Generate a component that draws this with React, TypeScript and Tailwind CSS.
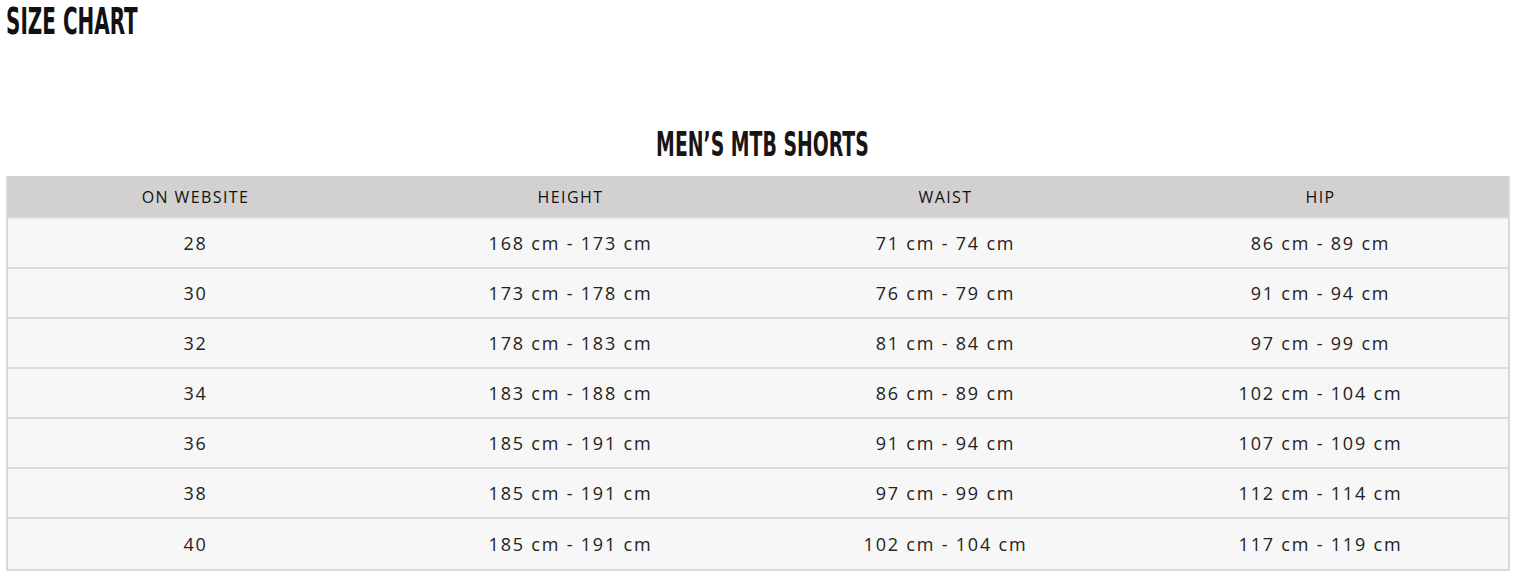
import React from 'react';

const rows = [
  ['28', '168 cm - 173 cm', '71 cm - 74 cm', '86 cm - 89 cm'],
  ['30', '173 cm - 178 cm', '76 cm - 79 cm', '91 cm - 94 cm'],
  ['32', '178 cm - 183 cm', '81 cm - 84 cm', '97 cm - 99 cm'],
  ['34', '183 cm - 188 cm', '86 cm - 89 cm', '102 cm - 104 cm'],
  ['36', '185 cm - 191 cm', '91 cm - 94 cm', '107 cm - 109 cm'],
  ['38', '185 cm - 191 cm', '97 cm - 99 cm', '112 cm - 114 cm'],
  ['40', '185 cm - 191 cm', '102 cm - 104 cm', '117 cm - 119 cm'],
];

const App: React.FC = () => {
  return (
    <div className="w-[1524px] h-[577px] bg-white px-[6px]">
      <h1 className="pt-[2px] text-[37px] leading-[40px] font-bold text-[#111] uppercase [font-family:'DejaVu_Sans_Condensed',sans-serif]">
        <span className="block w-max origin-left scale-x-[0.6]">Size Chart</span>
      </h1>

      <h2 className="mt-[84px] flex justify-center text-[33px] leading-[38px] font-bold text-[#1a1414] [font-family:'DejaVu_Sans_Condensed',sans-serif]">
        <span className="block w-max scale-x-[0.635]">MEN’S MTB SHORTS</span>
      </h2>

      <div className="mt-[12px] w-[1504px] border-x-2 border-b-2 border-[#d9d9d9] [font-family:'Open_Sans',sans-serif]">
        <div className="grid grid-cols-4 h-[43px] bg-[#d2d0d1] border-b-2 border-[#e2e2e2]">
          {['ON WEBSITE', 'HEIGHT', 'WAIST', 'HIP'].map((h) => (
            <div key={h} className="flex items-center justify-center text-[16px] tracking-[1.4px] text-[#111]">
              {h}
            </div>
          ))}
        </div>
        {rows.map((r, i) => (
          <div
            key={i}
            className={`grid grid-cols-4 h-[50px] bg-[#f7f7f7] ${i < rows.length - 1 ? 'border-b-2 border-[#dcdcdc]' : ''}`}
          >
            {r.map((c, j) => (
              <div key={j} className="flex items-center justify-center text-[18px] tracking-[1.8px] text-[#222]">
                {c}
              </div>
            ))}
          </div>
        ))}
      </div>
    </div>
  );
};

export default App;
